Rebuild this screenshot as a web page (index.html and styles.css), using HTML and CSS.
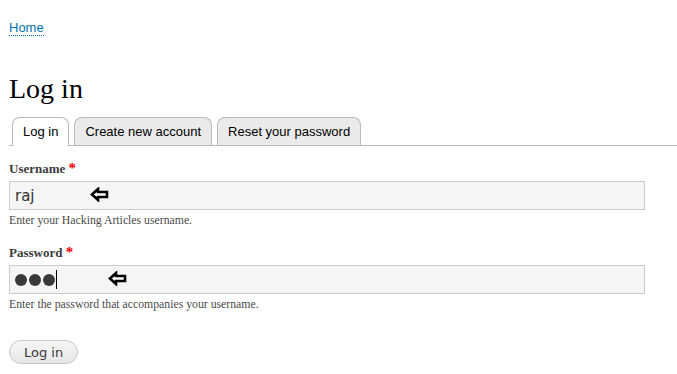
FILE: index.html
```html
<!DOCTYPE html>
<html lang="en">
<head>
    <meta charset="UTF-8">
    <meta name="viewport" content="width=device-width, initial-scale=1.0">
    <title>Log in | Hacking Articles</title>
    <link rel="stylesheet" href="styles.css">
</head>
<body>

    <div class="breadcrumb">
        <a href="#">Home</a>
    </div>

    <h1 class="page-title">Log in</h1>

    <ul class="tabs">
        <li class="tab active"><a href="#">Log in</a></li>
        <li class="tab"><a href="#">Create new account</a></li>
        <li class="tab"><a href="#">Reset your password</a></li>
    </ul>

    <form class="login-form">
        <div class="form-item">
            <label class="form-label">Username <span class="required">*</span></label>
            <div class="form-text">
                <span class="value">raj</span>
                <svg class="pointer pointer-user" width="19" height="15" viewBox="0 0 19 15">
                    <path d="M2 7.5 L8 2 L8 5 L17 5 L17 10 L8 10 L8 13 Z" fill="#fff" stroke="#000" stroke-width="2.6" stroke-linejoin="miter"/>
                </svg>
            </div>
            <div class="description">Enter your Hacking Articles username.</div>
        </div>

        <div class="form-item">
            <label class="form-label">Password <span class="required">*</span></label>
            <div class="form-text">
                <span class="dots"><i></i><i></i><i></i></span><span class="caret"></span>
                <svg class="pointer pointer-pass" width="19" height="15" viewBox="0 0 19 15">
                    <path d="M2 7.5 L8 2 L8 5 L17 5 L17 10 L8 10 L8 13 Z" fill="#fff" stroke="#000" stroke-width="2.6" stroke-linejoin="miter"/>
                </svg>
            </div>
            <div class="description">Enter the password that accompanies your username.</div>
        </div>

        <div class="form-actions">
            <button type="button" class="button">Log in</button>
        </div>
    </form>

</body>
</html>
```

FILE: styles.css
```css
* { box-sizing: border-box; }

body {
    margin: 0;
    font-family: 'Liberation Serif', 'Times New Roman', serif;
    color: #3b3b3b;
    background: #fff;
}

.breadcrumb { padding: 18px 9px 0; height: 37px; }
.breadcrumb a {
    font-family: 'Liberation Sans', Arial, sans-serif; font-size: 13px;
    color: #0071b3; text-decoration: none; border-bottom: 1px dotted #0071b3;
}

.page-title {
    margin: 34px 9px 0; font-size: 28px; font-weight: normal; color: #000;
    line-height: 36px;
}

.tabs {
    display: flex; gap: 5px; list-style: none;
    margin: 10px 0 0 9px; padding: 0 0 0 3px;
    border-bottom: 1px solid #bbb;
}
.tab {
    height: 28px; margin-bottom: -1px;
    border: 1px solid #bbb; border-bottom: none; border-radius: 8px 8px 0 0;
    background: #eaeaea;
}
.tab.active { background: #fff; height: 29px; }
.tab a {
    display: block; padding: 0 10px; line-height: 27px;
    font-family: 'Liberation Sans', Arial, sans-serif; font-size: 13px;
    color: #000; text-decoration: none;
}

.login-form { padding: 14px 9px 0; }

.form-item { margin-bottom: 16px; }
.form-label {
    display: block; font-weight: bold; font-size: 13px; color: #3b3b3b;
    line-height: 16px; margin-bottom: 4px;
}
.required { color: #e00; font-size: 15px; }

.form-text {
    display: flex; align-items: center;
    width: 636px; height: 29px; padding: 0 5px;
    background: #f5f5f5; border: 1px solid #ccc;
    font-family: 'DejaVu Sans', sans-serif; font-size: 15px; color: #333;
}
.pointer { display: block; margin-top: -3px; }
.pointer-user { margin-left: 55px; }
.pointer-pass { margin-left: 51px; }

.dots { display: flex; gap: 2px; }
.dots i { width: 12px; height: 12px; border-radius: 50%; background: #3a3a3a; }
.caret { width: 1px; height: 19px; background: #000; margin-left: 1px; }

.description { font-size: 11.75px; color: #4a4a4a; margin-top: 4px; line-height: 14px; }

.form-actions { padding-top: 12px; }
.button {
    height: 24px; padding: 0 14px; border-radius: 12px;
    border: 1px solid #c8c8c8;
    background: linear-gradient(#f6f6f6, #e6e6e6);
    font-family: 'DejaVu Sans', sans-serif; font-size: 13px; color: #3a3a3a;
}
```
